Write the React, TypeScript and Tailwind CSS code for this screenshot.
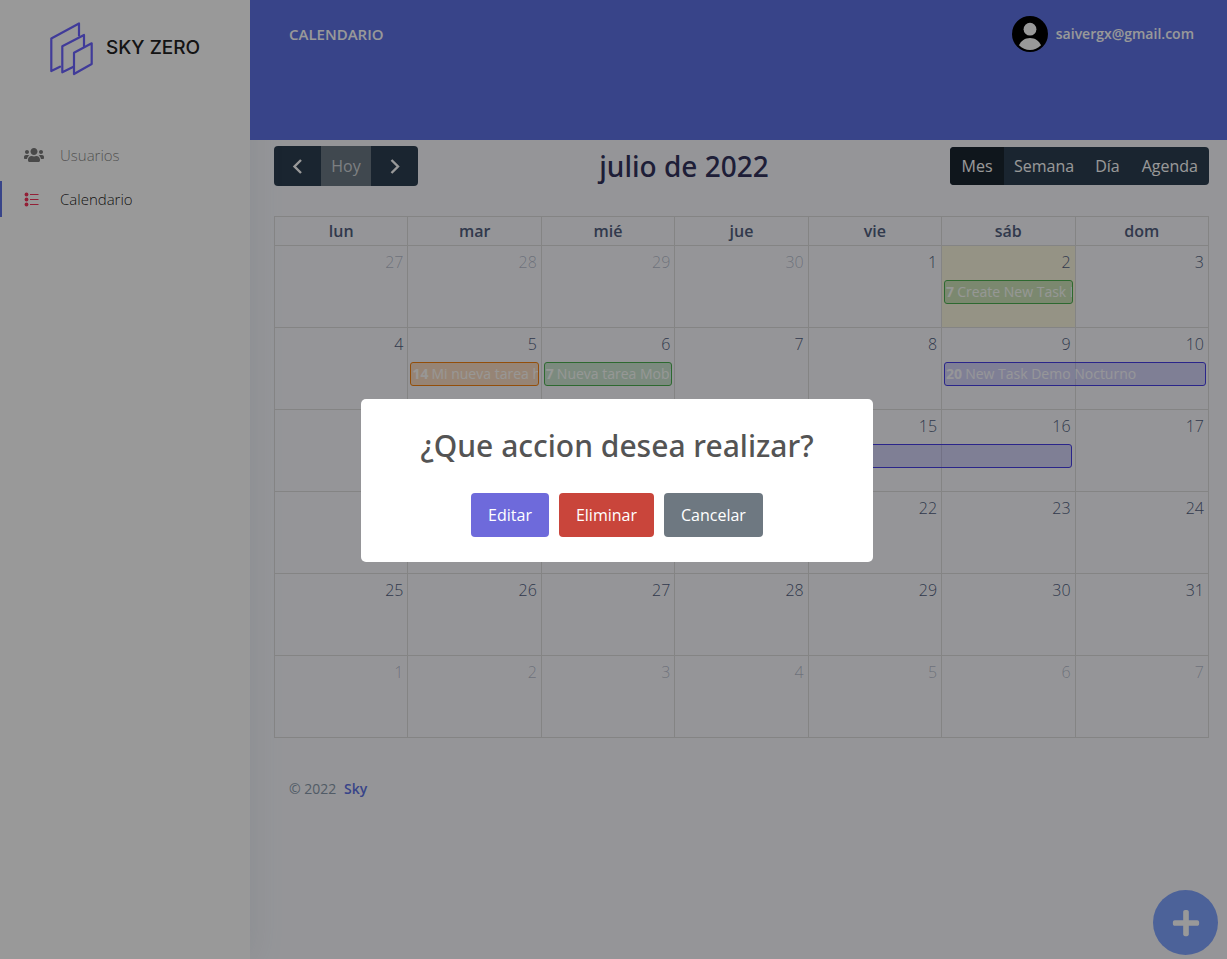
import { FaPlus, FaUsers } from "react-icons/fa";

type CalendarEvent = { time?: string; title?: string; span: number; tone: string };
type Day = { n: number; muted?: boolean; today?: boolean; event?: CalendarEvent };

const weekdays = ["lun", "mar", "mié", "jue", "vie", "sáb", "dom"];

const green = "border-[#4caf50] bg-[#4caf50]/25";
const orange = "border-[#f5820f] bg-[#ff8a14]/25";
const indigo = "border-[#473fe6] bg-[#473fe6]/20";

const spans: Record<number, string> = {
  1: "w-[calc(100%-4px)]",
  2: "w-[calc(200%-3px)]",
  4: "w-[calc(400%-2px)]",
};

const events: Record<number, CalendarEvent> = {
  2: { time: "7", title: "Create New Task Demo", span: 1, tone: green },
  5: { time: "14", title: "Mi nueva tarea hoy", span: 1, tone: orange },
  6: { time: "7", title: "Nueva tarea Mobile", span: 1, tone: green },
  9: { time: "20", title: "New Task Demo Nocturno", span: 2, tone: indigo },
  13: { span: 4, tone: indigo },
};

const weeks: Day[][] = Array.from({ length: 6 }, (_, w) =>
  Array.from({ length: 7 }, (_, d) => {
    const i = w * 7 + d - 3;
    if (i < 1) return { n: i + 30, muted: true };
    if (i > 31) return { n: i - 31, muted: true };
    return { n: i, today: i === 2, event: events[i] };
  }),
);

function Logo() {
  return (
    <svg className="h-[56px] w-[46px]" viewBox="0 0 46 56" fill="none" stroke="#6c63ff" strokeWidth="2.200" strokeLinejoin="round" strokeLinecap="round" aria-hidden="true">
      <path d="M12 46.700 3.300 51V18.500L31 3.500V15.500" />
      <path d="M25 47 14.300 52.300V26.300L36 15V26.500" />
      <path d="M26 32.700 43.700 23.300V44L26 54Z" />
    </svg>
  );
}

function ListIcon() {
  return (
    <svg className="size-4" viewBox="0 0 16 16" aria-hidden="true">
      <g fill="#f5365c">
        <circle cx="2.500" cy="3.500" r="1.900" />
        <circle cx="2.500" cy="8.500" r="1.900" />
        <circle cx="2.500" cy="13.500" r="1.900" />
        <path d="M6 3h8.500v1H6zM6 8h8.500v1H6zM6 13h8.500v1H6z" />
      </g>
    </svg>
  );
}

function Avatar() {
  return (
    <svg className="size-9" viewBox="0 0 36 36" aria-hidden="true">
      <circle cx="18" cy="18" r="18" fill="#000" />
      <circle cx="18" cy="13.2" r="6.4" fill="#fff" />
      <path d="M7 29.300C9 24.800 13 22 18 22s9 2.800 11 7.300C26 32.400 22.200 34 18 34S10 32.400 7 29.300Z" fill="#fff" />
    </svg>
  );
}

function Chevron({ d }: { d: string }) {
  return (
    <svg className="size-6" viewBox="0 0 24 24" fill="none" stroke="#fff" strokeWidth="2.400" aria-hidden="true">
      <path d={d} />
    </svg>
  );
}

function Sidebar() {
  return (
    <aside className="relative z-10 w-[250px] shrink-0 bg-white shadow-[0_0_32px_rgba(136,152,170,0.15)]">
      <a href="#inicio" className="flex items-center gap-3 pt-5 pl-12">
        <Logo />
        <span className="font-['Inter',sans-serif] text-[19px] font-medium text-[#222]">SKY ZERO</span>
      </a>
      <nav className="mt-[61px] flex flex-col gap-2 text-[15px] leading-5 font-light">
        <a href="#usuarios" className="flex h-9 items-center border-l-2 border-transparent pl-[22px] text-black/50">
          <span className="w-9"><FaUsers className="size-5 text-[#7a7a7a]" /></span>
          Usuarios
        </a>
        <a href="#calendario" className="flex h-9 items-center border-l-2 border-[#5e72e4] pl-[22px] text-black/90">
          <span className="w-9"><ListIcon /></span>
          Calendario
        </a>
      </nav>
    </aside>
  );
}

function Toolbar() {
  return (
    <div className="flex items-center justify-between text-white">
      <div className="flex h-10 overflow-hidden rounded bg-[#2c3e50]">
        <button type="button" aria-label="Anterior" className="flex w-[47px] items-center justify-center"><Chevron d="M15 6 8.500 12.500 15 19" /></button>
        <button type="button" className="w-[50px] bg-[#6b7884] text-white/70">Hoy</button>
        <button type="button" aria-label="Siguiente" className="flex w-[47px] items-center justify-center"><Chevron d="M8.500 6 15 12.500 8.500 19" /></button>
      </div>
      <h2 className="font-['Noto_Sans',sans-serif] text-[28px] leading-9 font-medium text-[#32325d]">julio de 2022</h2>
      <div className="flex h-[38px] overflow-hidden rounded bg-[#2c3e50]">
        <button type="button" className="w-[54px] bg-[#1a252f]">Mes</button>
        <button type="button" className="px-[10px]">Semana</button>
        <button type="button" className="px-[11px]">Día</button>
        <button type="button" className="px-[11px]">Agenda</button>
      </div>
    </div>
  );
}

function Month() {
  return (
    <table className="mt-[30px] w-full table-fixed border-collapse">
      <thead>
        <tr className="h-[29px]">
          {weekdays.map((d) => (
            <th key={d} scope="col" className="border border-[#dddddd] p-0 leading-7 font-semibold text-[#525f7f]">{d}</th>
          ))}
        </tr>
      </thead>
      <tbody>
        {weeks.map((week, w) => (
          <tr key={w} className="h-[82px]">
            {week.map((day, d) => (
              <td key={d} className={day.today ? "border border-[#dddddd] bg-[#ffdc28]/15 p-0 align-top" : "border border-[#dddddd] p-0 align-top"}>
                <div className={day.muted ? "p-1 text-right font-light text-[#525f7f]/40" : "p-1 text-right font-light text-[#525f7f]"}>{day.n}</div>
                {day.event && (
                  <div className="relative">
                    <div className={`absolute top-[2px] left-[2px] h-6 overflow-hidden rounded-[3px] border px-px text-sm leading-[22px] whitespace-nowrap text-white/90 ${day.event.tone} ${spans[day.event.span]}`}>
                      <span className="mr-[3px] font-bold">{day.event.time}</span>
                      {day.event.title}
                    </div>
                  </div>
                )}
              </td>
            ))}
          </tr>
        ))}
      </tbody>
    </table>
  );
}

function ActionDialog() {
  return (
    <div className="fixed inset-0 z-50 flex items-center justify-center bg-black/40 pt-[2px] pl-[7px]">
      <div role="dialog" aria-modal="true" aria-labelledby="dialog-title" className="flex w-full max-w-[512px] flex-col items-center rounded-[5px] bg-white pt-6 pb-[25px]">
        <h2 id="dialog-title" className="font-['Noto_Sans',sans-serif] text-3xl leading-[46px] font-medium text-[#545454]">¿Que accion desea realizar?</h2>
        <div className="mt-6 flex gap-[10px] text-white">
          <button type="button" className="h-11 rounded bg-[#6e6adb] px-[17px] font-medium">Editar</button>
          <button type="button" className="h-11 rounded bg-[#c9453b] px-[17px] font-medium">Eliminar</button>
          <button type="button" className="h-11 rounded bg-[#6e7881] px-[17px] font-medium">Cancelar</button>
        </div>
      </div>
    </div>
  );
}

export default function App() {
  return (
    <div className="flex min-h-screen bg-[#f8f9fe] font-['Open_Sans','Noto_Sans',sans-serif] text-base text-[#525f7f]">
      <Sidebar />
      <main className="min-w-0 flex-1">
        <header className="relative z-20 flex h-[140px] items-start justify-between bg-[#5e72e4] pt-4 pr-[33px] pl-[39px] text-sm font-semibold text-white">
          <h1 className="text-[15px] leading-9">CALENDARIO</h1>
          <a href="#perfil" className="flex items-center gap-2"><Avatar />saivergx@gmail.com</a>
        </header>
        <div className="pt-[6px] pr-[18px] pl-6">
          <Toolbar />
          <Month />
        </div>
        <footer className="px-[39px] pt-[41px] text-sm text-[#8898aa]">
          © 2022 <a href="#sky" className="ml-1 font-semibold text-[#5e72e4]">Sky</a>
        </footer>
      </main>
      <button type="button" aria-label="Agregar tarea" className="fixed right-[9px] bottom-1 flex size-[65px] items-center justify-center rounded-full bg-[#7fa3ff] text-white">
        <FaPlus className="size-[30px]" />
      </button>
      <ActionDialog />
    </div>
  );
}
